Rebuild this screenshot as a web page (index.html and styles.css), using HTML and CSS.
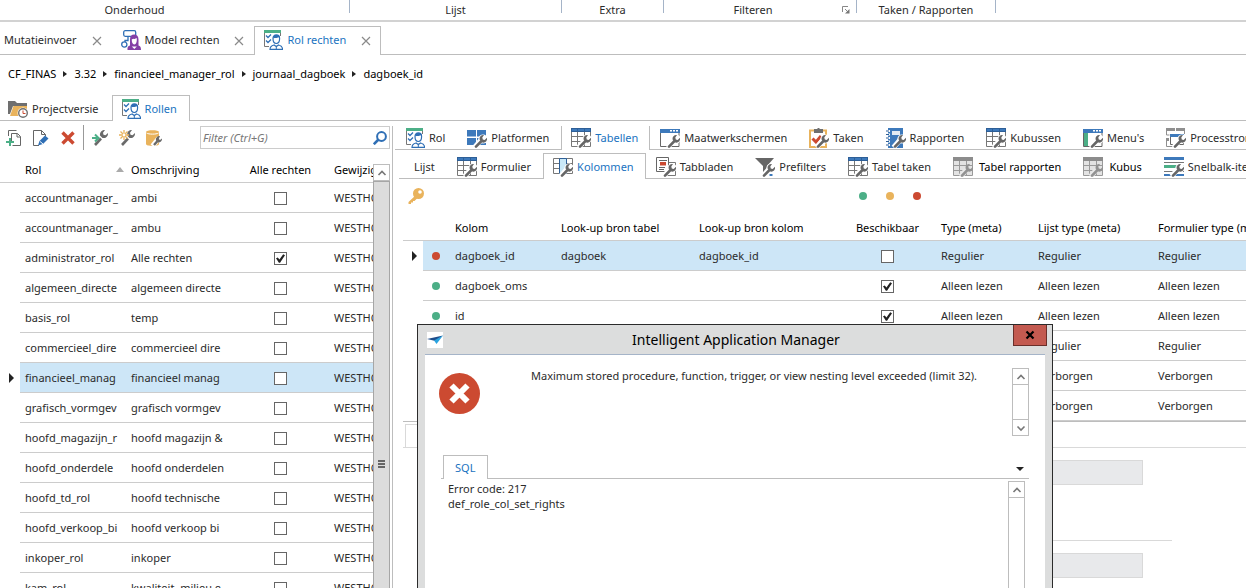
FILE: index.html
```
<!DOCTYPE html>
<html lang="nl">
  <head>
    <meta charset="UTF-8" />
    <meta name="viewport" content="width=device-width, initial-scale=1.0" />
    <title>Rol rechten</title>
    <link rel="stylesheet" href="styles.css">
  </head>
  <body>
    <!-- icons -->
    <svg class="sprite" aria-hidden="true">
      <symbol id="wrench" viewBox="0 0 20 20">
        <path d="M7.500 19.500 14 12" stroke="#fff" stroke-width="5" fill="none" />
        <circle cx="16" cy="11" r="4.600" fill="#fff" />
        <path d="M9 18.600 14.500 13" stroke="#666" stroke-width="2.600" stroke-linecap="round" fill="none" />
        <path d="M17 7a3.700 3.700 0 0 0-4.200 4.900l2.600 2.600a3.700 3.700 0 0 0 4.500-4.700l-2.200 2.100-1.900-.4-.5-2z" fill="#666" />
      </symbol>
      <symbol id="role" viewBox="0 0 20 20">
        <path d="M1 0h17v3H1z" fill="#4caf87" />
        <path d="M1.500 3v13.500H6M17.500 3v3" stroke="#777" fill="none" />
        <path d="M3 5.500 5 7.500 8 4.500M3 10.500 5 12.500 8 9.500" stroke="#2f6fb5" stroke-width="1.300" fill="none" />
        <path d="M7 19.400c0-3 1.300-3.700 4-4.400l2.300 1.500 2.300-1.500c2.700.7 4 1.400 4 4.400z" stroke="#2f6fb5" stroke-width="1.200" fill="#fff" />
        <path d="M10 8.500c0-2.400 1.300-3.600 3.300-3.600s3.300 1.200 3.300 3.600c0 2.700-1.200 5-3.300 5S10 11.200 10 8.500z" stroke="#2f6fb5" stroke-width="1.200" fill="#fff" />
        <path d="M10 8.200c2.300 0 4.800-.4 6.600-1.200L15.500 5h-4z" fill="#2f6fb5" />
        <path d="M13.300 16.500v3" stroke="#2f6fb5" />
      </symbol>
      <symbol id="model" viewBox="0 0 20 20">
        <rect x="2.700" y=".7" width="12" height="5.600" rx="1.500" stroke="#2f6fb5" stroke-width="1.300" fill="#fff" />
        <path d="M7 6.500v4H4v2" stroke="#2f6fb5" stroke-width="1.300" fill="none" />
        <circle cx="3.300" cy="14.500" r="2.600" stroke="#2f6fb5" stroke-width="1.300" fill="#fff" />
        <path d="M6.500 20c-.3-3 .8-4.200 2.500-4.500V9.500c0-3.300 1.600-4.900 4.200-4.900s4.300 1.600 4.300 4.900v6c1.700.3 2.500 1.500 2.500 4.500z" fill="#8440a6" />
        <path d="M10.800 9.300c1.700 0 3.500-.4 4.900-1.200.5 3.600-.5 6.400-2.400 6.400s-2.700-2.500-2.500-5.200z" fill="#fff" />
        <path d="M10.800 16.500h5l-2.500 2.500z" fill="#fff" />
      </symbol>
      <symbol id="folder" viewBox="0 0 20 20">
        <path d="M0 2h7l2 2h10v5h-2V7H5L2 15H0z" fill="#6f6f6f" />
        <path d="M5.500 7H19v10H2z" fill="#e9b35c" />
        <circle cx="15" cy="14" r="5.500" fill="#fff" />
        <circle cx="15" cy="14" r="4.300" stroke="#6f6f6f" stroke-width="1.400" fill="#fff" />
        <path d="M15 11.500V14.500h2.500" stroke="#cc4a31" fill="none" />
      </symbol>
      <symbol id="table" viewBox="0 0 20 20">
        <path d="M.5 3.500h19v15H.5zM.5 8.500h19M.5 13.500h19M6.500 3.500v15M13.500 3.500v15" stroke="#777" fill="#fff" />
        <path d="M0 0h20v4H0z" fill="#2e5f97" />
        <path d="M1 1h5v2H1zM7 1h6v2H7zM14 1h5v2h-5z" fill="#3d79bb" />
        <use href="#wrench" />
      </symbol>
      <symbol id="table-off" viewBox="0 0 20 20">
        <path d="M.5 3.500h19v15H.5zM.5 8.500h19M.5 13.500h19M6.500 3.500v15M13.500 3.500v15" stroke="#9a9a9a" fill="#e3e3e3" />
        <path d="M0 0h20v4H0z" fill="#8c8c8c" />
        <path d="M7.500 19.500 14 12" stroke="#e8e8e8" stroke-width="5" fill="none" />
        <path d="M9 18.600 14.500 13" stroke="#929292" stroke-width="2.600" stroke-linecap="round" fill="none" />
        <path d="M17 7a3.700 3.700 0 0 0-4.200 4.900l2.600 2.600a3.700 3.700 0 0 0 4.500-4.700l-2.200 2.100-1.900-.4-.5-2z" fill="#929292" />
      </symbol>
      <symbol id="platform" viewBox="0 0 20 20">
        <path d="M0 2h9v6.500H0zM10 2h9v6.500h-9zM0 10h9v7H0zM10 10h9v7h-9z" fill="#3d79bb" />
        <use href="#wrench" />
      </symbol>
      <symbol id="screen" viewBox="0 0 20 20">
        <path d="M.5 4v14.500H19V4" stroke="#666" fill="#fff" />
        <path d="M0 1h20v4H0z" fill="#3d79bb" />
        <path d="M10 2h2v1.500h-2zM13 2h2v1.500h-2zM16 2h2v1.500h-2z" fill="#fff" />
        <use href="#wrench" />
      </symbol>
      <symbol id="task" viewBox="0 0 20 20">
        <path d="M1 2.500h16V19H1z" stroke="#e9b35c" stroke-width="2" fill="#fff" />
        <path d="M5 1h3l1-1h1l1 1h3v4H5z" fill="#6f6f6f" />
        <path d="M3.500 10.500 7 14l5-6" stroke="#cc4a31" stroke-width="3" fill="none" />
        <use href="#wrench" />
      </symbol>
      <symbol id="report" viewBox="0 0 20 20">
        <path d="M2 0h15v20H2z" fill="#3d79bb" />
        <path d="M0 3h4M0 6.500h4M0 10h4M0 13.500h4M0 17h4" stroke="#fff" stroke-width="2" />
        <path d="M0 3h3M0 6.500h3M0 10h3M0 13.500h3M0 17h3" stroke="#2e5f97" />
        <path d="M6 3h8v4H6z" fill="#e3eaf2" />
        <use href="#wrench" />
      </symbol>
      <symbol id="menu" viewBox="0 0 20 20">
        <path d="M.5 4v14.500H19V4" stroke="#666" fill="#fff" />
        <path d="M0 1h20v4H0z" fill="#3d79bb" />
        <path d="M10 2h2v1.500h-2zM13 2h2v1.500h-2zM16 2h2v1.500h-2z" fill="#fff" />
        <path d="M1 5h4v13H1z" fill="#4caf87" />
        <use href="#wrench" />
      </symbol>
      <symbol id="flow" viewBox="0 0 20 20">
        <path d="M0 0h9v3H0zM10 0h9v3h-9zM0 10h3v3H0z" fill="#8f8f8f" />
        <path d="M.5 3v4h3M18.500 3v3M.5 13v5.500h6" stroke="#8f8f8f" fill="none" />
        <path d="M4.500 7v9.500h13V7" stroke="#666" fill="#fff" />
        <path d="M4 6h14v3H4z" fill="#3d79bb" />
        <use href="#wrench" />
      </symbol>
      <symbol id="column" viewBox="0 0 20 20">
        <path d="M.5 1.500h19v15H.5zM.5 6.500h19M.5 11.500h19" stroke="#777" fill="#fff" />
        <path d="M6.500 1.500h7v15h-7z" stroke="#2e5f97" fill="#c9e8f7" />
        <use href="#wrench" />
      </symbol>
      <symbol id="pages" viewBox="0 0 20 20">
        <path d="M9 5.500h10.500v13H9z" stroke="#777" fill="#fff" />
        <path d="M.5.500h12v14H.5z" stroke="#666" fill="#fff" />
        <path d="M3 3.500h8M3 10.500h6M3 12.500h5" stroke="#666" />
        <path d="M4 5h6v3.500H4z" fill="#cc4a31" />
        <use href="#wrench" />
      </symbol>
      <symbol id="funnel" viewBox="0 0 20 20">
        <path d="M0 1h19l-7 8v9l-4-3V9z" fill="#666" />
        <use href="#wrench" />
        <path d="M14.500 17h3v2h-3z" fill="#3d79bb" />
      </symbol>
      <symbol id="quick" viewBox="0 0 20 20">
        <path d="M0 0h20v3H0zM0 17h20v2H0z" fill="#3d79bb" />
        <path d="M0 5.500h20M0 14.500h20" stroke="#777" />
        <path d="M0 8h20v3H0z" fill="#4caf87" />
        <use href="#wrench" />
      </symbol>
      <symbol id="close" viewBox="0 0 10 10">
        <path d="M1 1 9 9M9 1 1 9" stroke="#8a8a8a" stroke-width="1.200" />
      </symbol>
      <symbol id="up" viewBox="0 0 10 10">
        <path d="M1.500 7 5 3.500 8.500 7" stroke="#777" stroke-width="1.600" fill="none" />
      </symbol>
      <symbol id="down" viewBox="0 0 10 10">
        <path d="M1.500 3.500 5 7 8.500 3.500" stroke="#777" stroke-width="1.600" fill="none" />
      </symbol>
    </svg>

    <header class="ribbon">
      <div class="ribbon-group ribbon-onderhoud">Onderhoud</div>
      <div class="ribbon-group ribbon-lijst">Lijst</div>
      <div class="ribbon-group ribbon-extra">Extra</div>
      <div class="ribbon-group ribbon-filteren">
        <span>Filteren</span>
        <svg class="launcher" viewBox="0 0 8 8"><path d="M.5 6V.5H6" stroke="#888" fill="none" /><path d="M3 3l3 3" stroke="#888" /><path d="M7.500 3v4.500H3z" fill="#777" /></svg>
      </div>
      <div class="ribbon-group ribbon-taken">Taken / Rapporten</div>
    </header>

    <nav class="tabs doc-tabs">
      <div class="tab">Mutatieinvoer <button class="tab-close" aria-label="Sluiten"><svg><use href="#close" /></svg></button></div>
      <div class="tab"><svg class="icon"><use href="#model" /></svg>Model rechten <button class="tab-close" aria-label="Sluiten"><svg><use href="#close" /></svg></button></div>
      <div class="tab active"><svg class="icon"><use href="#role" /></svg>Rol rechten <button class="tab-close" aria-label="Sluiten"><svg><use href="#close" /></svg></button></div>
    </nav>

    <nav class="breadcrumb">
      <a href="#">CF_FINAS</a>
      <a href="#">3.32</a>
      <a href="#">financieel_manager_rol</a>
      <a href="#">journaal_dagboek</a>
      <a href="#">dagboek_id</a>
    </nav>

    <nav class="tabs main-tabs">
      <button class="tab"><svg class="icon"><use href="#folder" /></svg>Projectversie</button>
      <button class="tab active"><svg class="icon"><use href="#role" /></svg>Rollen</button>
    </nav>

    <main class="workspace">
      <section class="roles">
        <div class="toolbar">
          <button class="tool" aria-label="Nieuw"><svg viewBox="0 0 16 16"><path d="M2.500 6V.500h8M5.500 11V3.500h6l3 3v9h-8" stroke="#666" fill="none" /><path d="M11 3.500V7h3.500" stroke="#666" fill="none" /><path d="M4 8v8M0 12h8" stroke="#4caf87" stroke-width="2" /></svg></button>
          <button class="tool" aria-label="Wijzigen"><svg viewBox="0 0 16 16"><path d="M6 15.500H.5V.5h8l4 4V6" stroke="#666" fill="none" /><path d="M8.500.5v4h4" stroke="#666" fill="none" /><path d="M5 15.500 6.500 11 12 5.500l3.500 3L10 14z" fill="#2f6fb5" /><path d="M7 11.500l3 2.500" stroke="#fff" /></svg></button>
          <button class="tool" aria-label="Verwijderen"><svg viewBox="0 0 16 16"><path d="M2.500 2.500 13.500 13.500M13.500 2.500 2.500 13.500" stroke="#cc4a31" stroke-width="3.400" /></svg></button>
          <span class="tool-line"></span>
          <button class="tool" aria-label="Toepassen"><svg viewBox="0 0 16 16"><path d="M3 15 9 8.500" stroke="#6a6a6a" stroke-width="2.600" /><path d="M13 0a4.600 4.600 0 0 0-5 5.500l2.500 2.500A4.600 4.600 0 0 0 16 3l-2.500 2.300-2-.5-.5-2z" fill="#6a6a6a" /><path d="M0 8h5" stroke="#4caf87" stroke-width="2" /><path d="M3 4.500 6.500 8 3 11.500" stroke="#4caf87" stroke-width="2" fill="none" /></svg></button>
          <button class="tool" aria-label="Genereren"><svg viewBox="0 0 16 16"><path d="M3 15 9 8.500" stroke="#6a6a6a" stroke-width="2.600" /><path d="M13 0a4.600 4.600 0 0 0-5 5.500l2.500 2.500A4.600 4.600 0 0 0 16 3l-2.500 2.300-2-.5-.5-2z" fill="#6a6a6a" /><circle cx="5" cy="5" r="3.500" fill="#fff" /><path d="M5 0v10M0 5h10M1.500 1.500l7 7M8.500 1.500l-7 7" stroke="#e9b35c" stroke-width="1.300" /><circle cx="5" cy="5" r="1.400" fill="#fff" /></svg></button>
          <button class="tool" aria-label="Database"><svg viewBox="0 0 16 16"><path d="M0 2c0-2.500 13-2.500 13 0v12c0 2.500-13 2.500-13 0z" fill="#e9b35c" /><path d="M.5 3c2 1.500 10 1.500 12 0" stroke="#fff" fill="none" /><path d="M6.500 16 13 8" stroke="#fff" stroke-width="5" /><path d="M8 15l3.500-4" stroke="#6a6a6a" stroke-width="2.400" /><path d="M14 6a3.600 3.600 0 0 0-4 4.500l2 2A3.600 3.600 0 0 0 16 8.500l-2 1.500-1.200-1z" fill="#6a6a6a" /></svg></button>
          <label class="filter">
            <input type="text" aria-label="Filter" placeholder="Filter (Ctrl+G)" />
            <svg class="search" viewBox="0 0 14 14"><circle cx="8.500" cy="5.500" r="4.400" stroke="#2f6fb5" stroke-width="2" fill="none" /><path d="M5.500 8.500.8 13.200" stroke="#2f6fb5" stroke-width="2.600" /></svg>
          </label>
        </div>

        <div class="roles-body">
          <div class="roles-scroll">
            <table class="grid roles-grid">
              <colgroup><col class="c-mark"><col class="c-name"><col class="c-name"><col class="c-check"><col class="c-user"></colgroup>
              <thead>
                <tr><th></th><th class="sorted">Rol</th><th>Omschrijving</th><th class="center">Alle rechten</th><th>Gewijzigd</th></tr>
              </thead>
              <tbody>
                <tr><td></td><td>accountmanager_</td><td>ambi</td><td class="center"><input type="checkbox" aria-label="Alle rechten" /></td><td>WESTHO</td></tr>
                <tr><td></td><td>accountmanager_</td><td>ambu</td><td class="center"><input type="checkbox" aria-label="Alle rechten" /></td><td>WESTHO</td></tr>
                <tr><td></td><td>administrator_rol</td><td>Alle rechten</td><td class="center"><input type="checkbox" aria-label="Alle rechten" checked /></td><td>WESTHO</td></tr>
                <tr><td></td><td>algemeen_directe</td><td>algemeen directe</td><td class="center"><input type="checkbox" aria-label="Alle rechten" /></td><td>WESTHO</td></tr>
                <tr><td></td><td>basis_rol</td><td>temp</td><td class="center"><input type="checkbox" aria-label="Alle rechten" /></td><td>WESTHO</td></tr>
                <tr><td></td><td>commercieel_dire</td><td>commercieel dire</td><td class="center"><input type="checkbox" aria-label="Alle rechten" /></td><td>WESTHO</td></tr>
                <tr class="selected"><td></td><td>financieel_manag</td><td>financieel manag</td><td class="center"><input type="checkbox" aria-label="Alle rechten" /></td><td>WESTHO</td></tr>
                <tr><td></td><td>grafisch_vormgev</td><td>grafisch vormgev</td><td class="center"><input type="checkbox" aria-label="Alle rechten" /></td><td>WESTHO</td></tr>
                <tr><td></td><td>hoofd_magazijn_r</td><td>hoofd magazijn &amp;</td><td class="center"><input type="checkbox" aria-label="Alle rechten" /></td><td>WESTHO</td></tr>
                <tr><td></td><td>hoofd_onderdele</td><td>hoofd onderdelen</td><td class="center"><input type="checkbox" aria-label="Alle rechten" /></td><td>WESTHO</td></tr>
                <tr><td></td><td>hoofd_td_rol</td><td>hoofd technische</td><td class="center"><input type="checkbox" aria-label="Alle rechten" /></td><td>WESTHO</td></tr>
                <tr><td></td><td>hoofd_verkoop_bi</td><td>hoofd verkoop bi</td><td class="center"><input type="checkbox" aria-label="Alle rechten" /></td><td>WESTHO</td></tr>
                <tr><td></td><td>inkoper_rol</td><td>inkoper</td><td class="center"><input type="checkbox" aria-label="Alle rechten" /></td><td>WESTHO</td></tr>
                <tr><td></td><td>kam_rol</td><td>kwaliteit, milieu e</td><td class="center"><input type="checkbox" aria-label="Alle rechten" /></td><td>WESTHO</td></tr>
              </tbody>
            </table>
          </div>
          <div class="scrollbar">
            <button class="scroll-btn" aria-label="Omhoog"><svg><use href="#up" /></svg></button>
            <div class="scroll-thumb"><span></span><span></span><span></span></div>
          </div>
        </div>
      </section>

      <section class="detail">
        <nav class="tabs detail-tabs">
          <button class="tab"><svg class="icon"><use href="#role" /></svg>Rol</button>
          <button class="tab"><svg class="icon"><use href="#platform" /></svg>Platformen</button>
          <button class="tab active"><svg class="icon"><use href="#table" /></svg>Tabellen</button>
          <button class="tab"><svg class="icon"><use href="#screen" /></svg>Maatwerkschermen</button>
          <button class="tab"><svg class="icon"><use href="#task" /></svg>Taken</button>
          <button class="tab"><svg class="icon"><use href="#report" /></svg>Rapporten</button>
          <button class="tab"><svg class="icon"><use href="#table" /></svg>Kubussen</button>
          <button class="tab"><svg class="icon"><use href="#menu" /></svg>Menu's</button>
          <button class="tab"><svg class="icon"><use href="#flow" /></svg>Processtromen</button>
        </nav>
        <div class="tab-page">
          <nav class="tabs detail-tabs">
            <button class="tab text-tab">Lijst</button>
            <button class="tab"><svg class="icon"><use href="#table" /></svg>Formulier</button>
            <button class="tab active"><svg class="icon"><use href="#column" /></svg>Kolommen</button>
            <button class="tab"><svg class="icon"><use href="#pages" /></svg>Tabbladen</button>
            <button class="tab"><svg class="icon"><use href="#funnel" /></svg>Prefilters</button>
            <button class="tab"><svg class="icon"><use href="#table" /></svg>Tabel taken</button>
            <button class="tab off"><svg class="icon"><use href="#table-off" /></svg>Tabel rapporten</button>
            <button class="tab off"><svg class="icon"><use href="#table-off" /></svg>Kubus</button>
            <button class="tab"><svg class="icon"><use href="#quick" /></svg>Snelbalk-items</button>
          </nav>
          <div class="columns-page">
            <div class="legend">
              <button class="tool" aria-label="Sleutel"><svg viewBox="0 0 16 16"><path d="M8 7 .5 14v2H3v-1.500h2V13h1.500l3-3" fill="#e9b35c" /><circle cx="10.500" cy="5.500" r="5.500" fill="#e9b35c" /><circle cx="12" cy="4" r="1.800" fill="#fff" /></svg></button>
              <div class="dots"><span class="dot green"></span><span class="dot orange"></span><span class="dot red"></span></div>
            </div>
            <table class="grid columns-grid">
              <colgroup><col class="c-mark"><col class="c-dot"><col class="c-name"><col class="c-table"><col class="c-column"><col class="c-check"><col class="c-check"><col class="c-list"><col class="c-form"></colgroup>
              <thead>
                <tr><th></th><th></th><th>Kolom</th><th>Look-up bron tabel</th><th>Look-up bron kolom</th><th class="center">Beschikbaar</th><th>Type (meta)</th><th>Lijst type (meta)</th><th>Formulier type (meta)</th></tr>
              </thead>
              <tbody>
                <tr class="selected"><td></td><td><span class="dot red"></span></td><td>dagboek_id</td><td>dagboek</td><td>dagboek_id</td><td class="center"><input type="checkbox" aria-label="Beschikbaar" /></td><td>Regulier</td><td>Regulier</td><td>Regulier</td></tr>
                <tr><td></td><td><span class="dot green"></span></td><td>dagboek_oms</td><td></td><td></td><td class="center"><input type="checkbox" aria-label="Beschikbaar" checked /></td><td>Alleen lezen</td><td>Alleen lezen</td><td>Alleen lezen</td></tr>
                <tr><td></td><td><span class="dot green"></span></td><td>id</td><td></td><td></td><td class="center"><input type="checkbox" aria-label="Beschikbaar" checked /></td><td>Alleen lezen</td><td>Alleen lezen</td><td>Alleen lezen</td></tr>
                <tr><td></td><td></td><td></td><td></td><td></td><td></td><td></td><td>Regulier</td><td>Regulier</td></tr>
                <tr><td></td><td></td><td></td><td></td><td></td><td></td><td></td><td>Verborgen</td><td>Verborgen</td></tr>
                <tr><td></td><td></td><td></td><td></td><td></td><td></td><td></td><td>Verborgen</td><td>Verborgen</td></tr>
              </tbody>
            </table>
            <div class="sub-tabs"><span></span></div>
            <form class="sub-form">
              <input type="text" aria-label="Type" disabled />
              <hr />
              <input type="text" aria-label="Lijst type" disabled />
            </form>
          </div>
        </div>
      </section>
    </main>

    <div class="dialog" role="dialog" aria-labelledby="dialog-title">
      <div class="dialog-bar">
        <svg class="dialog-logo" viewBox="0 0 16 16"><path d="M0 0h16v16H0z" fill="#fff" /><path d="M0 7 16 3.500 8.500 9z" fill="#1f4e8c" /><path d="M16 3.500 7 8.500l2.500 3.500z" fill="#29a3e0" /></svg>
        <h1 id="dialog-title">Intelligent Application Manager</h1>
        <button class="dialog-close" aria-label="Sluiten"><svg viewBox="0 0 10 10"><path d="M1.500 1.500 8.500 8.500M8.500 1.500 1.500 8.500" stroke="#000" stroke-width="2.200" /></svg></button>
      </div>
      <div class="dialog-body">
        <div class="message">
          <svg class="error-icon" viewBox="0 0 41 41"><circle cx="20.500" cy="20.500" r="20.500" fill="#cc4a31" /><path d="M12.500 12.500l16 16M28.500 12.500l-16 16" stroke="#fff" stroke-width="6" /></svg>
          <p>Maximum stored procedure, function, trigger, or view nesting level exceeded (limit 32).</p>
          <div class="scrollbar light">
            <button class="scroll-btn" aria-label="Omhoog"><svg><use href="#up" /></svg></button>
            <button class="scroll-btn" aria-label="Omlaag"><svg><use href="#down" /></svg></button>
          </div>
        </div>
        <nav class="tabs sql-tabs">
          <button class="tab active">SQL</button>
          <button class="tab-menu" aria-label="Tabbladen"></button>
        </nav>
        <div class="sql">
          <p>Error code: 217<br>def_role_col_set_rights</p>
          <div class="scrollbar light">
            <button class="scroll-btn" aria-label="Omhoog"><svg><use href="#up" /></svg></button>
          </div>
        </div>
      </div>
    </div>
  </body>
</html>
```
FILE: styles.css
```
* {
  box-sizing: border-box;
}

body {
  position: relative;
  display: flex;
  flex-direction: column;
  height: 100vh;
  margin: 0;
  overflow: hidden;
  background-color: #fff;
  color: #2b2b2b;
  font: 11px/15px 'Noto Sans', 'Open Sans', sans-serif;
}

button,
input {
  margin: 0;
  font: inherit;
  color: inherit;
}

button {
  padding: 0;
  border: 0;
  background: none;
}

a {
  color: inherit;
  text-decoration: none;
}

p {
  margin: 0;
}

svg {
  display: block;
  flex: none;
}

.sprite {
  position: absolute;
  width: 0;
  height: 0;
}

.icon {
  width: 20px;
  height: 20px;
  margin-right: 4px;
}

/* ribbon */

.ribbon {
  display: flex;
  flex: none;
  height: 22px;
  border-bottom: 2px solid #d2d2d2;
}

.ribbon-group {
  display: flex;
  justify-content: center;
  height: 13px;
  padding-top: 2px;
  border-right: 1px solid #a5b4c8;
}

.ribbon-onderhoud {
  width: 350px;
  padding-right: 80px;
}

.ribbon-lijst {
  width: 212px;
}

.ribbon-extra {
  width: 102px;
}

.ribbon-filteren {
  width: 193px;
  padding-right: 6px;
}

.ribbon-filteren span {
  flex: 1;
  text-align: center;
}

.ribbon-taken {
  width: 139px;
}

.launcher {
  width: 8px;
  height: 8px;
  margin-top: 4px;
}

/* tabs */

.tabs {
  display: flex;
  flex: none;
  border-bottom: 1px solid #bdbdbd;
}

.tab {
  display: flex;
  align-items: center;
  flex: none;
  margin-bottom: -1px;
  padding: 0 12px 0 8px;
  border: 1px solid transparent;
  border-bottom: 0;
  white-space: nowrap;
}

.tab.active {
  border-color: #bdbdbd;
  background-color: #fff;
  color: #1a73bf;
}

.tab.off {
  color: #000;
}

.tab.off .icon {
  margin-right: 6px;
}

.doc-tabs {
  height: 33px;
  padding-top: 4px;
}

.doc-tabs .tab {
  padding: 0 9px 3px 8px;
}

.doc-tabs .tab:first-child {
  padding-left: 3px;
}

.tab-close {
  margin: 2px 0 0 15px;
}

.tab-close svg {
  width: 10px;
  height: 10px;
}

.breadcrumb {
  display: flex;
  flex: none;
  padding: 11px 8px;
  color: #000;
}

.breadcrumb a:not(:first-child)::before {
  display: inline-block;
  margin: 0 7px;
  border: solid transparent;
  border-width: 3px 0 3px 4px;
  border-left-color: #222;
  vertical-align: 1px;
  content: '';
}

.main-tabs {
  height: 29px;
  padding-top: 3px;
}

.main-tabs .tab:first-child {
  padding-left: 7px;
}

/* left side */

.workspace {
  display: flex;
  flex: 1;
  min-height: 0;
}

.roles {
  display: flex;
  flex-direction: column;
  flex: none;
  width: 390px;
}

.toolbar {
  display: flex;
  align-items: center;
  flex: none;
  gap: 11px;
  height: 37px;
  padding: 0 0 4px 6px;
}

.tool svg {
  width: 16px;
  height: 16px;
}

.tool-line {
  width: 1px;
  height: 25px;
  margin: 0 -3px 0 -4px;
  background-color: #999;
}

.filter {
  display: flex;
  align-items: center;
  flex: 1;
  height: 23px;
  margin-left: 27px;
  padding: 0 2px;
  border: 1px solid #ccc;
}

.filter input {
  flex: 1;
  min-width: 0;
  padding: 0;
  border: 0;
  outline: 0;
}

.filter input::placeholder {
  color: #777;
  font-style: italic;
}

.search {
  width: 14px;
  height: 14px;
}

.roles-body {
  display: flex;
  flex: 1;
  min-height: 0;
}

.roles-scroll {
  flex: 1;
  min-width: 0;
  overflow: hidden;
}

/* grids */

.grid {
  table-layout: fixed;
  border-collapse: separate;
  border-spacing: 0;
}

.grid th,
.grid td {
  padding: 0 5px;
  overflow: hidden;
  border-bottom: 1px solid #ccc;
  text-align: left;
  font-weight: normal;
  white-space: nowrap;
}

.grid th {
  height: 25px;
  padding-bottom: 2px;
  color: #000;
}

.grid td {
  height: 30px;
}

.grid td:first-child {
  padding: 0;
  border-bottom-color: transparent;
}

.grid .center {
  text-align: center;
}

.grid .selected td:not(:first-child) {
  background-color: #cde6f7;
}

.grid .selected td:first-child::before {
  display: block;
  width: 5px;
  margin-left: 9px;
  border: solid transparent;
  border-width: 5px 0 5px 5px;
  border-left-color: #222;
  content: '';
}

.roles-grid {
  width: 400px;
}

.columns-grid {
  width: 880px;
}

.c-mark {
  width: 20px;
}

.c-dot {
  width: 27px;
}

.c-name {
  width: 106px;
}

.c-check {
  width: 97px;
}

.c-table {
  width: 138px;
}

.c-column {
  width: 145px;
}

.c-list {
  width: 120px;
}

.sorted::after {
  float: right;
  margin: 5px -3px 0 0;
  border: solid transparent;
  border-width: 0 4px 5px;
  border-bottom-color: #aaa;
  content: '';
}

input[type='checkbox'] {
  display: inline-block;
  width: 13px;
  height: 13px;
  border: 1px solid #666;
  background-color: #fff;
  appearance: none;
  vertical-align: middle;
}

input[type='checkbox']:checked::before {
  display: block;
  width: 9px;
  height: 9px;
  margin: 1px;
  background-color: #222;
  clip-path: polygon(0 45%, 20% 35%, 38% 58%, 80% 0, 100% 12%, 45% 95%, 32% 95%);
  content: '';
}

/* scrollbars */

.scrollbar {
  display: flex;
  flex-direction: column;
  flex: none;
  width: 17px;
  overflow: hidden;
}

.roles-body .scrollbar {
  margin-top: 6px;
}

.scroll-btn {
  display: grid;
  place-items: center;
  flex: none;
  height: 17px;
  border: 1px solid #bdbdbd;
}

.scroll-btn svg {
  width: 10px;
  height: 10px;
}

.scroll-thumb {
  display: flex;
  flex-direction: column;
  align-items: center;
  justify-content: center;
  flex: none;
  gap: 1px;
  height: 566px;
  border: 1px solid #a6a6a6;
  background-color: #dcdcdc;
}

.scroll-thumb span {
  width: 7px;
  height: 2px;
  background-color: #666;
}

.scrollbar.light {
  justify-content: space-between;
  border: solid #bdbdbd;
  border-width: 0 1px;
}

.light .scroll-btn {
  margin: 0 -1px;
}

/* right side */

.detail {
  flex: 1;
  min-width: 0;
  margin: 5px 0 0 2px;
  padding-left: 2px;
  overflow: hidden;
  border-left: 1px solid #bdbdbd;
}

.detail-tabs {
  height: 26px;
  margin-top: -2px;
}

.detail-tabs .tab {
  padding-left: 9px;
  padding-right: 11px;
}

.detail-tabs .text-tab {
  padding-left: 14px;
}

.tab-page {
  padding: 5px 0 0 4px;
}

.columns-page {
  padding-left: 4px;
}

.legend {
  display: flex;
  align-items: center;
  height: 37px;
  padding: 0 0 3px 5px;
}

.dots {
  display: flex;
  gap: 19px;
  margin-left: 435px;
}

.dot {
  display: block;
  width: 8px;
  height: 8px;
  border-radius: 50%;
}

.grid .dot {
  margin-left: 4px;
}

.green {
  background-color: #4caf87;
}

.orange {
  background-color: #e9b35c;
}

.red {
  background-color: #cc4a31;
}

.sub-tabs {
  display: flex;
  height: 27px;
  border: solid #bdbdbd;
  border-width: 1px 0;
  border-bottom-color: #d9d9d9;
}

.sub-tabs span {
  width: 60px;
  margin: 2px 0 0 2px;
  border: 1px solid #d9d9d9;
  border-bottom: 0;
}

.sub-form {
  width: 612px;
  margin: 12px 0 0 157px;
}

.sub-form input {
  display: block;
  width: 583px;
  height: 25px;
  border: 1px solid #d9d9d9;
  background-color: #e8e9eb;
}

.sub-form hr {
  margin: 55px 0 12px;
  border: 0;
  border-top: 1px solid #d9d9d9;
}

/* error dialog */

.dialog {
  position: absolute;
  top: 324px;
  bottom: 0;
  left: 417px;
  display: flex;
  flex-direction: column;
  width: 636px;
  padding: 0 7px;
  border: 1px solid #2b2b2b;
  border-bottom: 0;
  background-color: #dcdddd;
}

.dialog-bar {
  display: flex;
  align-items: center;
  height: 29px;
  padding-left: 2px;
}

.dialog-logo {
  width: 16px;
  height: 16px;
}

.dialog h1 {
  flex: 1;
  margin: 0;
  padding-left: 16px;
  color: #000;
  font-size: 14px;
  font-weight: normal;
  text-align: center;
}

.dialog-close {
  display: grid;
  place-items: center;
  align-self: flex-start;
  width: 34px;
  height: 21px;
  margin-right: -2px;
  border: 1px solid #6b2f2a;
  border-top: 0;
  background-color: #c35a50;
}

.dialog-close svg {
  width: 10px;
  height: 10px;
}

.dialog-body {
  display: flex;
  flex-direction: column;
  flex: 1;
  padding: 13px 16px 0 14px;
  border-top: 1px solid #a5b4c8;
  background-color: #fff;
}

.message {
  display: flex;
  height: 68px;
}

.error-icon {
  width: 41px;
  height: 41px;
  margin: 5px 51px 0 0;
}

.message p {
  flex: 1;
}

.sql-tabs {
  align-items: stretch;
  height: 24px;
  margin: 19px 0 0 2px;
  padding-left: 2px;
}

.sql-tabs .tab {
  padding: 0 12px 0 11px;
}

.tab-menu {
  margin: 12px 5px 0 auto;
  align-self: flex-start;
  border: solid transparent;
  border-width: 4px 4px 0;
  border-top-color: #222;
}

.sql {
  display: flex;
  flex: 1;
  justify-content: space-between;
  padding: 2px 4px 0 9px;
}
```
